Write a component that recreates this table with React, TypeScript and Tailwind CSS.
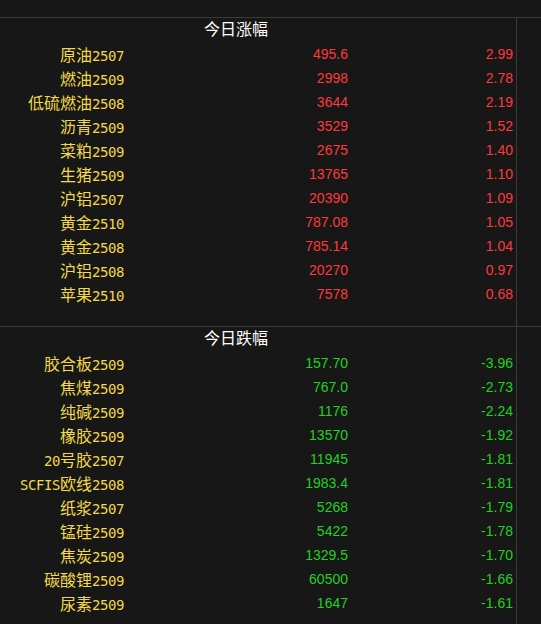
const up = [
  ['原油2507', '495.6', '2.99'],
  ['燃油2509', '2998', '2.78'],
  ['低硫燃油2508', '3644', '2.19'],
  ['沥青2509', '3529', '1.52'],
  ['菜粕2509', '2675', '1.40'],
  ['生猪2509', '13765', '1.10'],
  ['沪铝2507', '20390', '1.09'],
  ['黄金2510', '787.08', '1.05'],
  ['黄金2508', '785.14', '1.04'],
  ['沪铝2508', '20270', '0.97'],
  ['苹果2510', '7578', '0.68'],
];

const down = [
  ['胶合板2509', '157.70', '-3.96'],
  ['焦煤2509', '767.0', '-2.73'],
  ['纯碱2509', '1176', '-2.24'],
  ['橡胶2509', '13570', '-1.92'],
  ['20号胶2507', '11945', '-1.81'],
  ['SCFIS欧线2508', '1983.4', '-1.81'],
  ['纸浆2507', '5268', '-1.79'],
  ['锰硅2509', '5422', '-1.78'],
  ['焦炭2509', '1329.5', '-1.70'],
  ['碳酸锂2509', '60500', '-1.66'],
  ['尿素2509', '1647', '-1.61'],
];

// split a contract name into CJK runs and ascii runs (ascii drawn half width)
function Name({ text }: { text: string }) {
  const parts = text.match(/[\x00-\x7f]+|[^\x00-\x7f]+/g) ?? [];
  return (
    <span className="whitespace-nowrap text-[#f2d84a]">
      {parts.map((p, i) =>
        /^[\x00-\x7f]/.test(p) ? (
          <span key={i} className="font-['DejaVu_Sans_Mono',monospace] text-[14px] font-light tracking-[-0.43px]">
            {p}
          </span>
        ) : (
          <span key={i} className="font-['Noto_Sans_CJK_SC',sans-serif] text-[16px]">
            {p}
          </span>
        )
      )}
    </span>
  );
}

function Section({
  title,
  rows,
  color,
  grow,
}: {
  title: string;
  rows: string[][];
  color: string;
  grow?: boolean;
}) {
  return (
    <div className={`flex border-t border-[#3b3b3b] ${grow ? 'flex-1' : ''}`}>
      <div className={`w-[517px] border-r border-[#3b3b3b] ${grow ? '' : 'pb-5'}`}>
        <div className="h-6 pl-[204px] pt-[2px] font-['Noto_Sans_CJK_SC',sans-serif] text-[16px] leading-none text-white">
          {title}
        </div>
        {rows.map(([name, price, pct]) => (
          <div key={name} className="grid h-6 grid-cols-[124px_224px_165px] items-center leading-none">
            <div className="text-right">
              <Name text={name} />
            </div>
            <div className={`text-right font-['Liberation_Sans',Arial,sans-serif] text-[14px] ${color}`}>{price}</div>
            <div className={`text-right font-['Liberation_Sans',Arial,sans-serif] text-[14px] ${color}`}>{pct}</div>
          </div>
        ))}
      </div>
      <div className="flex-1" />
    </div>
  );
}

export default function App() {
  return (
    <div className="flex h-[624px] w-[541px] flex-col overflow-hidden bg-[#171717]">
      <div className="h-[17px] shrink-0" />
      <Section title="今日涨幅" rows={up} color="text-[#ff3a3a]" />
      <Section title="今日跌幅" rows={down} color="text-[#22d022]" grow />
    </div>
  );
}
